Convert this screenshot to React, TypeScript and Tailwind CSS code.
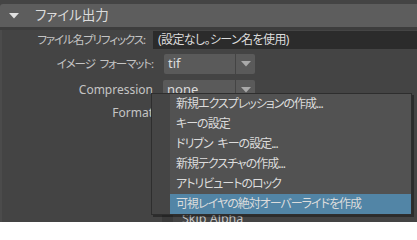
import React from 'react';

const menuItems = [
  '新規エクスプレッションの作成...',
  'キーの設定',
  'ドリブン\u2002キーの設定...',
  '新規テクスチャの作成...',
  'アトリビュートのロック',
  '可視レイヤの絶対オーバーライドを作成',
];

const Arrow: React.FC = () => (
  <svg width="10" height="6" viewBox="0 0 10 6">
    <path d="M0 0 L10 0 L5 5.5 Z" fill="#a9a9a9" />
  </svg>
);

const Dropdown: React.FC<{ value: string; offset: string; width: string }> = ({ value, offset, width }) => (
  <div className={`flex h-[20px] ${offset}`}>
    <div className={`${width} h-full bg-[#5a5a5a] rounded-l-[2px] pl-[4px] flex items-center text-[#dcdcdc] text-[13px]`}>
      {value}
    </div>
    <div className="ml-[1px] w-[19px] h-full bg-[#5a5a5a] rounded-r-[2px] flex items-center justify-center">
      <Arrow />
    </div>
  </div>
);

export default function App() {
  return (
    <div className="relative w-[417px] h-[222px] overflow-hidden bg-[#444444] pt-[4px] font-['Noto_Sans','Noto_Sans_CJK_JP',sans-serif] text-[12px] text-[#c4c4c4] [font-feature-settings:'palt']">
      {/* section header */}
      <div className="flex items-center h-[23px] bg-[#5d5d5d] rounded-tl-[3px]">
        <svg className="ml-[9px]" width="10" height="6" viewBox="0 0 10 6">
          <path d="M0 0 L10 0 L5 5.5 Z" fill="#e0e0e0" />
        </svg>
        <span className="ml-[16px] text-[13.5px] text-[#dcdcdc]">ファイル出力</span>
      </div>
      <div className="h-[3px] bg-[#3d3d3d]" />

      {/* form rows */}
      <div className="border-l-[2px] border-[#4b4b4b] pt-[1px]">
        <div className="flex items-center h-[18px]">
          <div className="w-[143px] text-right text-[11.5px] tracking-[-1.1px]">ファイル名プリフィックス:</div>
          <div className="ml-[8px] flex-1 h-full bg-[#2b2b2b] pl-[5px] flex items-center text-[#dcdcdc] text-[12px] tracking-[-0.6px]">
            (設定なし。シーン名を使用)
          </div>
        </div>

        <div className="flex items-center mt-[5px]">
          <div className="w-[151px] text-right text-[11.5px] tracking-[-1.1px]">イメージ{'\u2002'}フォーマット:</div>
          <Dropdown value="tif" offset="ml-[11px]" width="w-[71px]" />
        </div>

        <div className="flex items-center mt-[6px]">
          <div className="w-[151px] text-right">Compression</div>
          <Dropdown value="none" offset="ml-[10px]" width="w-[72px]" />
        </div>

        <div className="flex items-center mt-[3px] h-[20px]">
          <div className="w-[151px] text-right">Format</div>
        </div>

        <div className="flex items-center mt-[87px] h-[18px]">
          <div className="ml-[160px] w-[11px] h-[11px] bg-[#3a3a3a]" />
          <span className="ml-[9px] text-[12.5px]">Skip Alpha</span>
        </div>
      </div>

      {/* context menu */}
      <div className="absolute left-[151px] top-[93px] w-[261px] border border-[#2e2e2e] bg-[#525252] shadow-[2px_2px_0_rgba(0,0,0,0.35)] flex">
        <div className="w-[18px] bg-[#454545]" />
        <div className="flex-1 flex flex-col">
          {menuItems.map((item, i) => (
            <div
              key={item}
              className={`h-[20px] pl-[6px] flex items-center text-[12px] text-[#dcdcdc] tracking-[-1px] ${
                i === menuItems.length - 1 ? 'bg-[#5285a6]' : ''
              }`}
            >
              {item}
            </div>
          ))}
        </div>
      </div>
    </div>
  );
}
